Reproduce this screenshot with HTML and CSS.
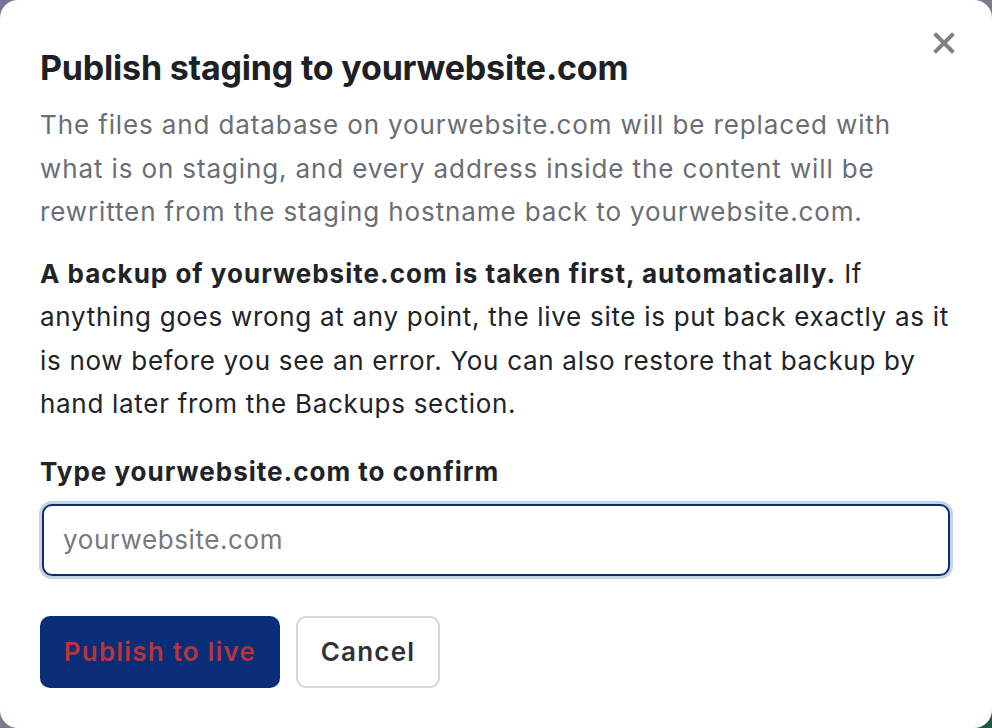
FILE: index.html
```
<!DOCTYPE html>
<html lang="en">
<head>
  <meta charset="UTF-8" />
  <title>Publish staging</title>
  <link rel="stylesheet" href="styles.css">
</head>
<body>
  <div class="dialog">
    <button class="close-btn" aria-label="Close">
      <svg width="22" height="22" viewBox="0 0 22 22"><path d="M3 3 L19 19 M19 3 L3 19" stroke="#7d8186" stroke-width="4" stroke-linecap="square"/></svg>
    </button>
    <h1 class="title">Publish staging to yourwebsite.com</h1>
    <p class="lead">The files and database on yourwebsite.com will be replaced with what is on staging, and every address inside the content will be rewritten from the staging hostname back to yourwebsite.com.</p>
    <p class="note"><strong>A backup of yourwebsite.com is taken first, automatically.</strong> If anything goes wrong at any point, the live site is put back exactly as it is now before you see an error. You can also restore that backup by hand later from the Backups section.</p>
    <label class="confirm-label" for="confirmInput">Type yourwebsite.com to confirm</label>
    <input type="text" id="confirmInput" class="confirm-input" placeholder="yourwebsite.com" autofocus />
    <div class="actions">
      <button class="btn btn-publish">Publish to live</button>
      <button class="btn btn-cancel">Cancel</button>
    </div>
  </div>
</body>
</html>
```

FILE: styles.css
```
html, body {
  height: 100%;
}
body {
  margin: 0;
  font-family: Inter, "Noto Sans", sans-serif;
  background: linear-gradient(135deg, #77739a 0%, #7c7c8a 50%, #7c7c86 96.5%, #1f5646 96.5%);
}
.dialog {
  position: relative;
  box-sizing: border-box;
  height: 728px;
  background: #fff;
  border-radius: 18px;
  padding: 46px 40px 0 40px;
}
.close-btn {
  position: absolute;
  top: 32px;
  right: 37px;
  background: none;
  border: none;
  padding: 0;
  cursor: pointer;
}
.title {
  margin: 0 0 13px 0;
  font-size: 34px;
  line-height: 44px;
  font-weight: 700;
  color: #1d2024;
  letter-spacing: -0.2px;
}
.lead {
  margin: 0 0 18px 0;
  font-size: 26px;
  line-height: 43.5px;
  letter-spacing: 0.88px;
  color: #6a6e74;
}
.note {
  margin: 0 0 24px 0;
  font-size: 26px;
  line-height: 43.5px;
  letter-spacing: 0.7px;
  color: #202328;
}
.note strong {
  font-weight: 700;
  letter-spacing: 1px;
}
.confirm-label {
  display: block;
  font-size: 26px;
  line-height: 43px;
  font-weight: 700;
  letter-spacing: 1px;
  color: #202328;
  margin-bottom: 11px;
}
.confirm-input {
  display: block;
  box-sizing: border-box;
  width: 908px;
  margin-left: 2px;
  height: 72px;
  border: 2px solid #0b2d6c;
  border-radius: 10px;
  box-shadow: 0 0 0 3px #c7d2e6;
  padding: 0 19px;
  font-family: Inter, "Noto Sans", sans-serif;
  font-size: 26px;
  letter-spacing: 0.6px;
  color: #202328;
  caret-color: #202328;
  outline: none;
}
.confirm-input::placeholder {
  color: #77797d;
}
.actions {
  display: flex;
  gap: 16px;
  margin-top: 40px;
}
.btn {
  height: 72px;
  border-radius: 10px;
  font-family: Inter, "Noto Sans", sans-serif;
  font-size: 26px;
  font-weight: 600;
  letter-spacing: 1.2px;
  cursor: pointer;
}
.btn-publish {
  width: 240px;
  background: #0a2d78;
  color: #b8343a;
  border: none;
}
.btn-cancel {
  width: 144px;
  background: #fff;
  color: #2e3136;
  border: 2px solid #d2d5db;
}
```
